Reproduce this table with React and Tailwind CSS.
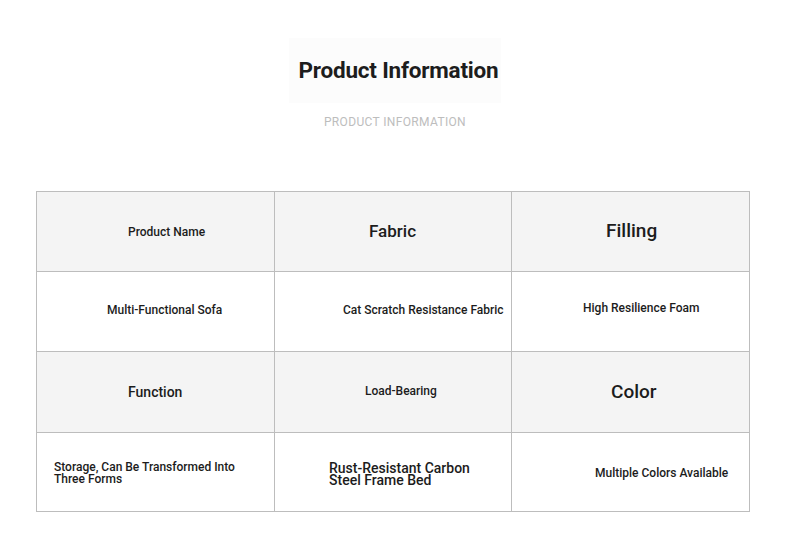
const cells = [
  { text: 'Product Name', head: true, cls: 'pl-[91px] text-[12px]' },
  { text: 'Fabric', head: true, cls: 'pl-[94px] text-[17px]' },
  { text: 'Filling', head: true, cls: 'pl-[94px] text-[19px]' },
  { text: 'Multi-Functional Sofa', cls: 'pl-[70px] pb-[3px] text-[12px]' },
  { text: 'Cat Scratch Resistance Fabric', cls: 'pl-[68px] pb-[3px] text-[12px]' },
  { text: 'High Resilience Foam', cls: 'pl-[71px] pb-[7px] text-[12px]' },
  { text: 'Function', head: true, cls: 'pl-[91px] text-[14px]' },
  { text: 'Load-Bearing', head: true, cls: 'pl-[90px] pb-[2px] text-[12px]' },
  { text: 'Color', head: true, cls: 'pl-[99px] text-[19px]' },
  { text: 'Storage, Can Be Transformed Into Three Forms', cls: 'pl-[17px] pt-[2px] text-[12px] leading-[12px] pr-[36px]' },
  { text: 'Rust-Resistant Carbon Steel Frame Bed', cls: 'pl-[54px] pt-[3px] text-[14px] leading-[12px] pr-[30px]' },
  { text: 'Multiple Colors Available', cls: 'pl-[83px] pt-[1px] text-[12px]' },
];

const rowHeights = ['h-[80px]', 'h-[80px]', 'h-[81px]', 'h-[79px]'];

export default function App() {
  return (
    <div className="w-[790px] h-[558px] bg-white font-['Roboto',sans-serif] text-[#1c1c1c]">
      {/* Heading */}
      <div className="flex flex-col items-center pt-[38px]">
        <div className="w-[212px] h-[65px] bg-[#fcfcfc] flex items-center justify-center pl-[7px]">
          <h1 className="text-[22.5px] font-bold text-[#1d1d1d] tracking-[-0.2px]">Product Information</h1>
        </div>
        <p className="mt-[10px] text-[12px] text-[#bdbdbd] tracking-[0.35px]">PRODUCT INFORMATION</p>
      </div>

      {/* Spec table */}
      <div className="ml-[36px] mt-[60px] w-[714px] grid grid-cols-[238px_237px_238px] border-l border-t border-[#bdbdbd]">
        {cells.map((c, i) => (
          <div
            key={i}
            className={`${rowHeights[Math.floor(i / 3)]} flex items-center border-r border-b border-[#bdbdbd] ${c.head ? 'bg-[#f4f4f4]' : 'bg-white'}`}
          >
            <span className={`block font-medium ${c.cls}`}>{c.text}</span>
          </div>
        ))}
      </div>
    </div>
  );
}
